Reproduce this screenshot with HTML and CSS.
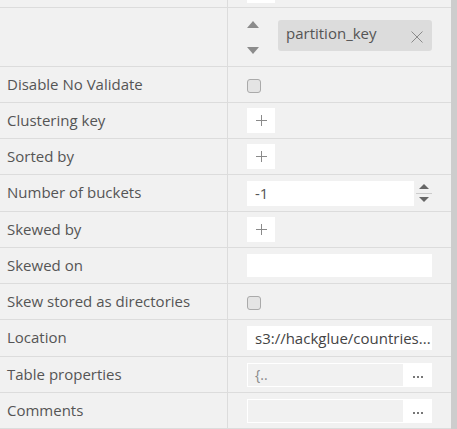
FILE: index.html
```html
<!DOCTYPE html>
<html>
<head>
<meta charset="utf-8">
<link rel="stylesheet" href="styles.css">
</head>
<body>
<div class="page">
  <div class="table">
    <div class="row row-top">
      <div class="label"></div>
      <div class="value"><span class="stub"></span></div>
    </div>
    <div class="row row-partition">
      <div class="label"></div>
      <div class="value">
        <div class="order">
          <span class="tri tri-up"></span>
          <span class="tri tri-down"></span>
        </div>
        <div class="chip">
          <span class="chip-text">partition_key</span>
          <svg class="chip-x" width="12" height="12" viewBox="0 0 12 12"><path d="M0.5 0.5L11.5 11.5M11.5 0.5L0.5 11.5" stroke="#8a8a8a" stroke-width="1" fill="none"/></svg>
        </div>
      </div>
    </div>
    <div class="row">
      <div class="label">Disable No Validate</div>
      <div class="value"><span class="check"></span></div>
    </div>
    <div class="row">
      <div class="label">Clustering key</div>
      <div class="value"><span class="plus"><svg width="11" height="11" viewBox="0 0 11 11"><path d="M5.5 0V11M0 5.5H11" stroke="#8a8a8a" stroke-width="1" fill="none"/></svg></span></div>
    </div>
    <div class="row">
      <div class="label">Sorted by</div>
      <div class="value"><span class="plus"><svg width="11" height="11" viewBox="0 0 11 11"><path d="M5.5 0V11M0 5.5H11" stroke="#8a8a8a" stroke-width="1" fill="none"/></svg></span></div>
    </div>
    <div class="row row-tall">
      <div class="label">Number of buckets</div>
      <div class="value">
        <div class="num">-1</div>
        <div class="spin">
          <span class="sp sp-up"></span>
          <span class="sp-line"></span>
          <span class="sp sp-down"></span>
        </div>
      </div>
    </div>
    <div class="row">
      <div class="label">Skewed by</div>
      <div class="value"><span class="plus"><svg width="11" height="11" viewBox="0 0 11 11"><path d="M5.5 0V11M0 5.5H11" stroke="#8a8a8a" stroke-width="1" fill="none"/></svg></span></div>
    </div>
    <div class="row">
      <div class="label">Skewed on</div>
      <div class="value"><div class="text-input"></div></div>
    </div>
    <div class="row">
      <div class="label">Skew stored as directories</div>
      <div class="value"><span class="check"></span></div>
    </div>
    <div class="row row-tall">
      <div class="label">Location</div>
      <div class="value"><div class="loc">s3://hackglue/countries...</div></div>
    </div>
    <div class="row">
      <div class="label">Table properties</div>
      <div class="value">
        <div class="edit">
          <div class="edit-text">{..</div>
          <div class="edit-btn"><span></span><span></span><span></span></div>
        </div>
      </div>
    </div>
    <div class="row">
      <div class="label">Comments</div>
      <div class="value">
        <div class="edit">
          <div class="edit-text"></div>
          <div class="edit-btn"><span></span><span></span><span></span></div>
        </div>
      </div>
    </div>
  </div>
  <div class="scrollbar"></div>
</div>
</body>
</html>
```

FILE: styles.css
```css
html, body {
  margin: 0;
  padding: 0;
  background: #f1f1f1;
}
body {
  font-family: "Open Sans", "Liberation Sans", sans-serif;
  font-size: 15px;
  color: #555;
}
.page {
  display: flex;
  width: 457px;
  height: 429px;
  overflow: hidden;
}
.table {
  width: 451px;
  flex: none;
}
.scrollbar {
  flex: 1;
  background: #cdcdcd;
}
.row {
  display: grid;
  grid-template-columns: 228px 1fr;
  height: 36px;
  box-sizing: border-box;
  border-bottom: 1px solid #dcdcdc;
}
.row-tall { height: 37px; }
.row-top { height: 8px; }
.row-partition { height: 59px; }
.label {
  box-sizing: border-box;
  border-right: 1px solid #dcdcdc;
  padding-left: 7px;
  padding-bottom: 2px;
  display: flex;
  align-items: center;
  white-space: nowrap;
  color: #555;
}
.value {
  display: flex;
  align-items: center;
  padding: 0 19px;
  min-width: 0;
}
.row-top .value { align-items: flex-start; }
.stub {
  display: block;
  width: 28px;
  height: 3px;
  background: #fff;
}
.order {
  width: 13px;
  height: 33px;
  display: flex;
  flex-direction: column;
  justify-content: space-between;
  margin-top: 1px;
}
.tri {
  display: block;
  width: 0;
  height: 0;
  border-left: 6px solid transparent;
  border-right: 6px solid transparent;
}
.tri-up { border-bottom: 7px solid #8c8c8c; }
.tri-down { border-top: 7px solid #8c8c8c; }
.chip {
  margin-left: 18px;
  flex: 1;
  height: 31px;
  background: #dcdcdc;
  border-radius: 3px;
  display: flex;
  align-items: center;
  justify-content: space-between;
  padding: 0 9px 0 8px;
  box-sizing: border-box;
  margin-top: -3px;
}
.chip-text {
  font-size: 15px;
  color: #555;
  margin-top: -5px;
}
.chip-x { display: block; margin-top: 2px; }
.check {
  display: block;
  width: 12px;
  height: 12px;
  border: 1px solid #aaa;
  background: #e4e4e4;
  border-radius: 3px;
  margin-top: 3px;
}
.plus {
  width: 28px;
  height: 25px;
  background: #fff;
  display: flex;
  align-items: center;
  justify-content: center;
}
.plus svg { display: block; }
.num {
  width: 168px;
  height: 25px;
  background: #fff;
  box-sizing: border-box;
  padding-left: 8px;
  line-height: 25px;
  color: #555;
}
.spin {
  width: 16px;
  margin-left: 2px;
  display: flex;
  flex-direction: column;
  align-items: center;
}
.sp {
  display: block;
  width: 0;
  height: 0;
  border-left: 5px solid transparent;
  border-right: 5px solid transparent;
}
.sp-up { border-bottom: 5px solid #666; }
.sp-down { border-top: 5px solid #666; }
.sp-line {
  display: block;
  width: 16px;
  height: 1px;
  background: #ccc;
  margin: 4px 0 3px;
}
.text-input {
  flex: 1;
  height: 23px;
  background: #fff;
}
.loc {
  flex: 1;
  height: 24px;
  background: #fff;
  box-sizing: border-box;
  padding-left: 8px;
  line-height: 24px;
  font-size: 15px;
  color: #444;
  white-space: nowrap;
  overflow: hidden;
}
.edit {
  flex: 1;
  height: 24px;
  background: #fff;
  box-sizing: border-box;
  padding: 1px 0 1px 1px;
  display: flex;
}
.edit-text {
  flex: 1;
  background: #f1f1f1;
  padding-left: 7px;
  line-height: 22px;
  color: #888;
  font-size: 14px;
}
.edit-btn {
  width: 29px;
  display: flex;
  align-items: center;
  justify-content: center;
  gap: 2px;
  padding-top: 4px;
}
.edit-btn span {
  display: block;
  width: 2px;
  height: 2px;
  background: #777;
}
```
